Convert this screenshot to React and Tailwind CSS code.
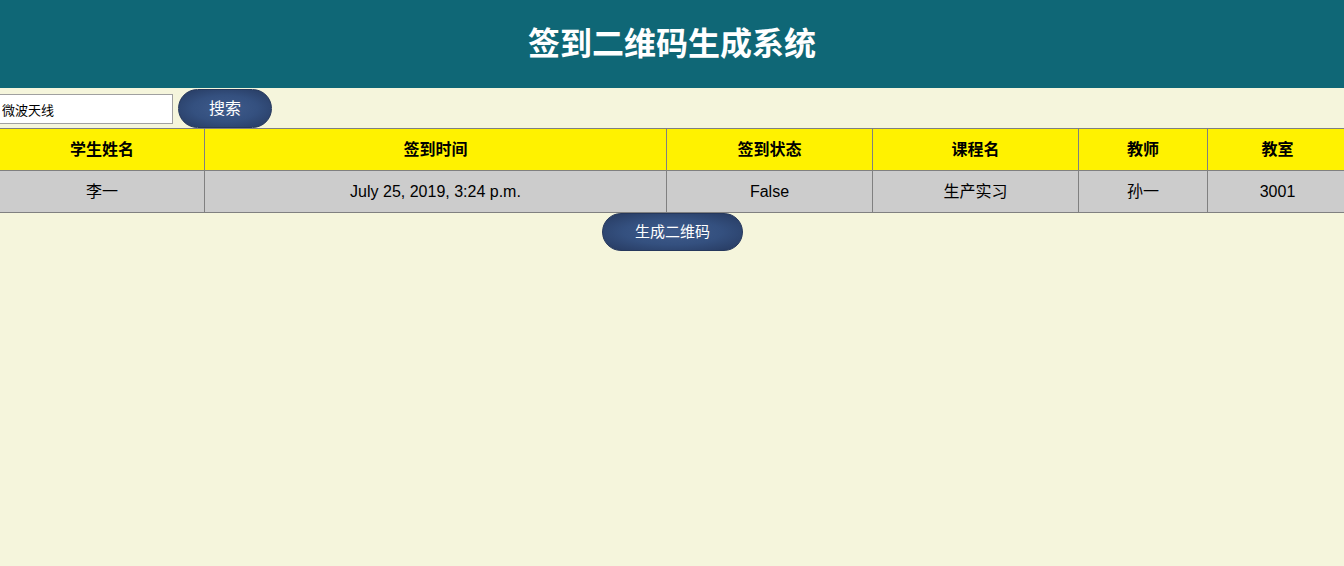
import React from "react";

const font = { fontFamily: '"Liberation Sans", "Noto Sans CJK SC", sans-serif' };

const cols = ["w-[205px]", "w-[462px]", "w-[206px]", "w-[206px]", "w-[129px]", "w-[140px]"];
const heads = ["学生姓名", "签到时间", "签到状态", "课程名", "教师", "教室"];
const row = ["李一", "July 25, 2019, 3:24 p.m.", "False", "生产实习", "孙一", "3001"];

export default function App() {
  return (
    <div className="min-h-[566px] w-full overflow-hidden bg-[#f5f5dc] text-black" style={font}>
      <header className="flex h-[88px] items-center justify-center bg-[#0f6776]">
        <h1 className="text-[32px] font-bold leading-none text-white">签到二维码生成系统</h1>
      </header>

      <div className="flex h-[40px] items-center gap-[5px] -ml-[3px]">
        <input
          defaultValue="微波天线"
          className="mt-[2px] h-[30px] w-[176px] border border-[#a0a0a0] bg-white px-[4px] text-[13px] outline-none"
        />
        <button className="mt-[1px] h-[39px] w-[94px] rounded-full border border-[#26385c] bg-[radial-gradient(ellipse_at_center,#3f5b8b_0%,#34507f_50%,#26395f_100%)] text-[16px] text-white">
          搜索
        </button>
      </div>

      <div className="-ml-[1px] w-[1350px]">
        <div className="flex border-t border-b border-[#808080] bg-[#fff200]">
          {heads.map((h, i) => (
            <div
              key={i}
              className={`${cols[i]} flex h-[41px] shrink-0 items-center justify-center border-l border-[#808080] text-[16px] font-bold`}
            >
              {h}
            </div>
          ))}
        </div>
        <div className="flex border-b border-[#808080] bg-[#cccccc]">
          {row.map((c, i) => (
            <div
              key={i}
              className={`${cols[i]} flex h-[41px] shrink-0 items-center justify-center border-l border-[#808080] text-[16px]`}
            >
              {c}
            </div>
          ))}
        </div>
      </div>

      <div className="flex justify-center">
        <button className="ml-[1px] h-[38px] w-[141px] rounded-full border border-[#26385c] bg-[radial-gradient(ellipse_at_center,#3f5b8b_0%,#34507f_50%,#26395f_100%)] text-[15px] text-white">
          生成二维码
        </button>
      </div>
    </div>
  );
}
